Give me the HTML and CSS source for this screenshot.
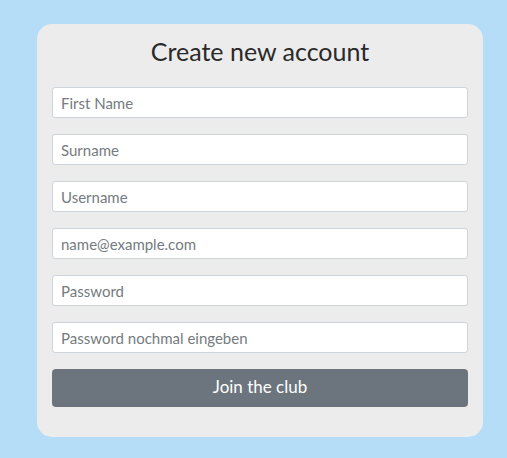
FILE: index.html
```html
<!DOCTYPE html>
<html lang="en">
<head>
<meta charset="utf-8">
<title>Create new account</title>
<link rel="stylesheet" href="styles.css">
</head>
<body>
<main class="page">
  <form class="card">
    <h2 class="title">Create new account</h2>
    <input class="field" type="text" placeholder="First Name">
    <input class="field" type="text" placeholder="Surname">
    <input class="field" type="text" placeholder="Username">
    <input class="field" type="email" placeholder="name@example.com">
    <input class="field" type="password" placeholder="Password">
    <input class="field" type="password" placeholder="Password nochmal eingeben">
    <button class="submit" type="button">Join the club</button>
  </form>
</main>
</body>
</html>
```
FILE: styles.css
```css
html, body {
  margin: 0;
  padding: 0;
  background: #b5ddf8;
  font-family: Lato, "Open Sans", sans-serif;
}
.page {
  padding: 24px 0 0 37px;
}
.card {
  width: 446px;
  box-sizing: border-box;
  background: #ececec;
  border-radius: 15px;
  padding: 13px 15px 30px;
  display: flex;
  flex-direction: column;
}
.title {
  margin: 0 0 21px;
  font-size: 25px;
  line-height: 29px;
  font-weight: 400;
  color: #2a2a2a;
  text-align: center;
}
.field {
  height: 31px;
  box-sizing: border-box;
  margin: 0 0 16px;
  padding: 0 8px;
  border: 1px solid #ced4da;
  border-radius: 3px;
  background: #fff;
  font-family: inherit;
  font-size: 15px;
  color: #495057;
}
.field::placeholder {
  color: #757b80;
  opacity: 1;
}
.submit {
  height: 38px;
  border: none;
  border-radius: 4px;
  background: #6c757d;
  color: #fff;
  font-family: inherit;
  font-size: 17px;
  line-height: 36px;
  padding: 0 0 2px;
}
```
